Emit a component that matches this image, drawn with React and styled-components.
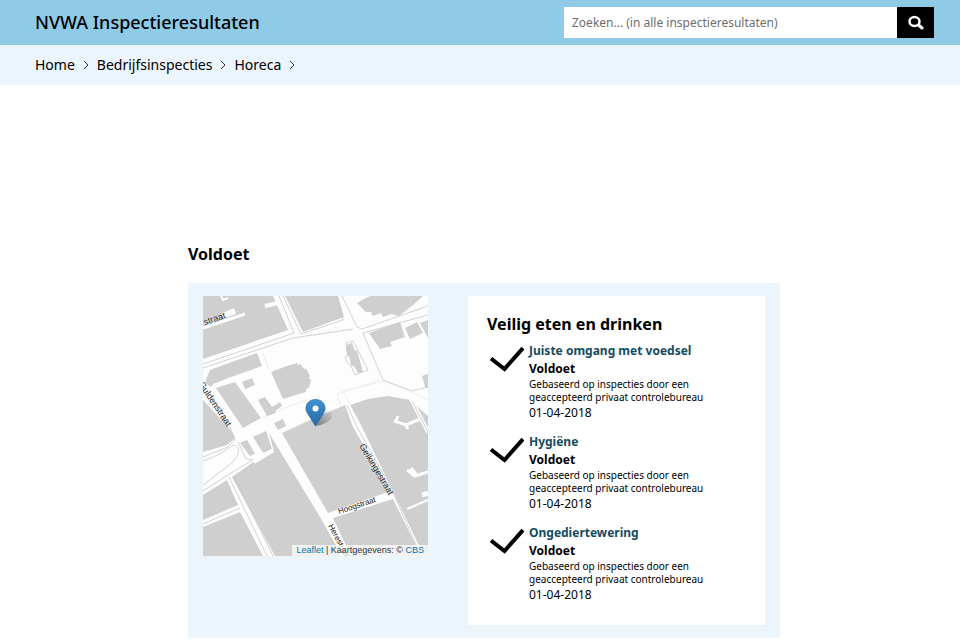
import { useState } from 'react';
import styled, { createGlobalStyle } from 'styled-components';

const GlobalStyle = createGlobalStyle`
  * {
    box-sizing: border-box;
  }

  body {
    margin: 0;
    background-color: #fff;
    color: #000;
    font-family: 'Noto Sans', 'Open Sans', sans-serif;
  }
`;

const TopBar = styled.header`
  display: flex;
  align-items: center;
  justify-content: space-between;
  height: 45px;
  padding: 0 26px 0 35px;
  background-color: #8fcae7;
`;

const SiteTitle = styled.a`
  padding-bottom: 2px;
  font-size: 18px;
  font-weight: 500;
  line-height: 24px;
  color: #000;
  text-decoration: none;
`;

const SearchForm = styled.form`
  display: flex;
  width: 370px;
  height: 31px;
`;

const SearchInput = styled.input`
  flex: 1;
  min-width: 0;
  padding: 0 8px;
  border: none;
  outline: none;
  background-color: #fff;
  font-family: inherit;
  font-size: 12px;
  color: #000;

  &::placeholder {
    color: #6e6e6e;
    opacity: 1;
  }
`;

const SearchButton = styled.button`
  display: flex;
  align-items: center;
  justify-content: center;
  width: 37px;
  padding: 0;
  border: none;
  background-color: #000;
  cursor: pointer;
`;

const Breadcrumb = styled.nav`
  display: flex;
  align-items: center;
  gap: 8px;
  height: 40px;
  padding: 0 35px;
  background-color: #ecf5fc;
`;

const Crumb = styled.a`
  font-size: 14px;
  line-height: 20px;
  color: #000;
  text-decoration: none;
`;

const Main = styled.main`
  padding: 157px 180px 2px 188px;
`;

const Verdict = styled.h2`
  margin: 0 0 17px;
  font-size: 16px;
  font-weight: 700;
  line-height: 24px;
`;

const Panel = styled.section`
  display: grid;
  grid-template-columns: 225fr 297fr;
  align-items: start;
  gap: 40px;
  padding: 13px 15px;
  background-color: #ecf5fc;
`;

const MapBox = styled.div`
  position: relative;
  overflow: hidden;

  svg {
    display: block;
    width: 100%;
  }
`;

const Attribution = styled.div`
  position: absolute;
  right: 0;
  bottom: 0;
  padding: 0 4px;
  background-color: rgba(255, 255, 255, 0.7);
  font-family: 'Liberation Sans', Arial, sans-serif;
  font-size: 9px;
  line-height: 11px;
  color: #333;

  a {
    color: #0078a8;
    text-decoration: none;
  }
`;

const Card = styled.article`
  padding: 16px 19px 10px;
  background-color: #fff;
`;

const CardTitle = styled.h3`
  margin: 0 0 6px;
  font-size: 16px;
  font-weight: 700;
  line-height: 24px;
`;

const ResultList = styled.ul`
  margin: 0;
  padding: 0;
  list-style: none;
`;

const ResultItem = styled.li`
  display: grid;
  grid-template-columns: 34px 1fr;
  gap: 5px;
  padding: 0 0 11px 3px;
`;

const CheckIcon = styled.svg`
  width: 34px;
  height: 26px;
  margin-top: 4px;
`;

const ResultLink = styled.a`
  display: block;
  font-size: 12px;
  font-weight: 700;
  line-height: 18px;
  color: #154b60;
  text-decoration: none;
`;

const ResultStatus = styled.div`
  font-size: 12px;
  font-weight: 700;
  line-height: 18px;
`;

const ResultSource = styled.p`
  max-width: 190px;
  margin: 0;
  font-size: 10px;
  line-height: 13px;
`;

const ResultDate = styled.div`
  font-size: 12px;
  line-height: 18px;
`;

const crumbs = ['Home', 'Bedrijfsinspecties', 'Horeca'];

const results = [
  { id: 1, title: 'Juiste omgang met voedsel', date: '01-04-2018' },
  { id: 2, title: 'Hygiëne', date: '01-04-2018' },
  { id: 3, title: 'Ongediertewering', date: '01-04-2018' },
];

const buildings = [
  '0,0 70,0 85,34 0,63',
  '82,0 135,0 141,21 100,36',
  '7,74 54,57 59,70 28,81 10,88 8,91 2,87 4,81',
  '39,86 49,82 52,89 42,93',
  '13,92 32,86 58,122 40,132',
  '68,76 84,70 94,67 95,69 98,68 99,71 104,74 107,80 106,82 108,84 106,92 103,93 103,96 80,103',
  '55,104 62,101 69,111 77,106 79,110 72,115 73,117 64,120',
  '71,127 80,123 83,130 75,134',
  '0,104 27,133 32,142 24,149 0,156',
  '37,147 44,144 52,158 47,160',
  '50,141 63,135 69,153 60,157',
  '29,181 52,165 71,156 66,137 117,221 139,260 72,260',
  '0,199 24,184 35,209 0,224',
  '0,231 37,216 60,260 0,260',
  '79,137 107,124 142,109 150,131 188,195 125,217',
  '130,222 190,203 218,260 148,260',
  '147,109 165,103 185,100 207,104 225,120 225,260 221,260 157,127',
  '154,7 161,3 167,0 220,0 210,9 196,20 188,18 180,21 178,17 170,20 168,16 163,16',
  '166,37 197,26 202,41 187,46 189,50 177,53',
  '202,32 214,26 220,37 207,43',
  '217,27 225,24 225,42',
  '219,80 225,78 225,92 222,91',
  '143,49 149,47 152,55 154,54 160,76 155,77 151,70 148,70 146,60 144,59',
];

// white strips drawn over the buildings
const alleys = [
  { d: 'M0 32 42 18', w: 3 },
  { d: 'M18 0 20 4 25 2', w: 2 },
  { d: 'M20 20 32 15', w: 6 },
  { d: 'M62 10 75 7', w: 4 },
  { d: 'M51 166 69 155', w: 4 },
  { d: 'M45 140 61 160', w: 3 },
  { d: 'M208 103 225 136', w: 4 },
  { d: 'M191 125 203 129 217 123', w: 3 },
  { d: 'M195 120 193 125M203 129 205 133', w: 3 },
  { d: 'M204 174 212 180 225 176', w: 3 },
  { d: 'M207 173 212 179', w: 6 },
  { d: 'M204 213 225 204', w: 2 },
  { d: 'M219 199 225 197', w: 5 },
];

const kerbs = [
  'M76 0 91 37 0 68',
  'M80 0 98 38 140 24 133 0',
  'M0 72 90 42 150 33',
  'M139 0 154 31 159 33 225 10',
  'M225 19 160 37 180 84 209 95 225 91',
  'M143 47 150 45 165 74 152 79 149 72 144 66 142 61 145 60Z',
  'M0 165C14 160 24 154 30 149C38 150 37 158 29 167L0 189',
  'M0 161 25 151 32 143 27 131',
  'M35 146 43 163 50 164 28 177 0 195',
  'M26 181 64 260M31 181 70 260',
  'M0 228 37 212',
  'M144 109 154 131 188 192 218 260',
  'M209 105 225 136',
];

const lightKerbs = [
  'M138 112 134 98 178 84M147 108 140 95 182 85 225 104',
  'M60 58 66 74M59 122 79 113 106 103',
];

const StreetMap = () => (
  <svg viewBox='0 0 225 260' role='img' aria-label='Kaart'>
    <defs>
      <linearGradient id='pin' x1='0' y1='0' x2='0' y2='1'>
        <stop offset='0' stopColor='#3f94d0' />
        <stop offset='1' stopColor='#2367a6' />
      </linearGradient>
      <linearGradient id='pinShadow' x1='0' y1='1' x2='1' y2='0'>
        <stop offset='0' stopColor='#555' stopOpacity='0.7' />
        <stop offset='1' stopColor='#777' stopOpacity='0.1' />
      </linearGradient>
    </defs>
    <rect width='225' height='260' fill='#fefdfd' />
    <g fill='none' stroke='#f0eded'>
      {lightKerbs.map((d) => (
        <path key={d} d={d} />
      ))}
    </g>
    <g fill='#cfcfcf'>
      {buildings.map((points) => (
        <polygon key={points} points={points} />
      ))}
    </g>
    <g fill='none' stroke='#fefdfd'>
      {alleys.map((alley) => (
        <path key={alley.d} d={alley.d} strokeWidth={alley.w} />
      ))}
    </g>
    <g fill='none' stroke='#c9c5c5' strokeWidth='0.8'>
      {kerbs.map((d) => (
        <path key={d} d={d} />
      ))}
    </g>
    <g
      fill='#222'
      fontFamily="'Liberation Sans', Arial, sans-serif"
      fontSize='9'
      stroke='#fff'
      strokeOpacity='0.5'
      strokeWidth='1'
      paintOrder='stroke'
    >
      <text transform='translate(23 22) rotate(-19)' textAnchor='end'>
        straat
      </text>
      <text transform='translate(24 131) rotate(56)' textAnchor='end'>
        Guldenstraat
      </text>
      <text transform='translate(156 150) rotate(59)'>Gelkingestraat</text>
      <text transform='translate(136 218) rotate(-18)' fontSize='8'>
        Hoogstraat
      </text>
      <text transform='translate(125 230) rotate(62)' fontSize='8'>
        Herestraat
      </text>
    </g>
    <path d='M113 130 118 119C122 113 131 115 129 121C127 126 119 129 113 130Z' fill='url(#pinShadow)' />
    <path
      d='M112.500 130 105 118C103 115 103 113 103 112.500C103 107 107 103.500 112.500 103.500S122 107 122 112.500C122 114 121 116 120 118Z'
      fill='url(#pin)'
      stroke='#2e6c97'
      strokeWidth='0.8'
    />
    <circle cx='112.500' cy='112.500' r='3' fill='#fff' />
  </svg>
);

const App = () => {
  const [query, setQuery] = useState('');

  return (
    <>
      <GlobalStyle />
      <TopBar>
        <SiteTitle href='#'>NVWA Inspectieresultaten</SiteTitle>
        <SearchForm role='search' onSubmit={(e) => e.preventDefault()}>
          <SearchInput
            type='text'
            aria-label='Zoeken'
            placeholder='Zoeken... (in alle inspectieresultaten)'
            value={query}
            onChange={(e) => setQuery(e.target.value)}
          />
          <SearchButton type='submit' aria-label='Zoeken'>
            <svg width='17' height='16' viewBox='0 0 17 16' fill='none' stroke='#fff'>
              <ellipse cx='7.500' cy='6.500' rx='5' ry='4.500' strokeWidth='2.500' />
              <path d='M11.500 10 15 13' strokeWidth='3' strokeLinecap='round' />
            </svg>
          </SearchButton>
        </SearchForm>
      </TopBar>
      <Breadcrumb aria-label='Kruimelpad'>
        {crumbs.map((crumb) => [
          <Crumb key={crumb} href='#'>
            {crumb}
          </Crumb>,
          <svg key={`${crumb}-sep`} width='6' height='10' viewBox='0 0 6 10' fill='none' stroke='#333'>
            <path d='M1 1 5 5 1 9' />
          </svg>,
        ])}
      </Breadcrumb>
      <Main>
        <Verdict>Voldoet</Verdict>
        <Panel>
          <MapBox>
            <StreetMap />
            <Attribution>
              <a href='#'>Leaflet</a> | Kaartgegevens: © <a href='#'>CBS</a>
            </Attribution>
          </MapBox>
          <Card>
            <CardTitle>Veilig eten en drinken</CardTitle>
            <ResultList>
              {results.map((result) => (
                <ResultItem key={result.id}>
                  <CheckIcon viewBox='0 0 34 26' fill='none' stroke='#000' strokeWidth='4'>
                    <path d='M1 12.500 14.500 23 33 2' />
                  </CheckIcon>
                  <div>
                    <ResultLink href='#'>{result.title}</ResultLink>
                    <ResultStatus>Voldoet</ResultStatus>
                    <ResultSource>
                      Gebaseerd op inspecties door een geaccepteerd privaat controlebureau
                    </ResultSource>
                    <ResultDate>{result.date}</ResultDate>
                  </div>
                </ResultItem>
              ))}
            </ResultList>
          </Card>
        </Panel>
      </Main>
    </>
  );
};

export default App;
